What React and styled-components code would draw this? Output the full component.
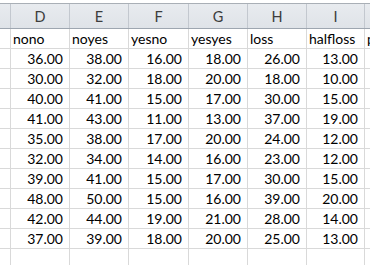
import React from 'react';
import styled, { createGlobalStyle } from 'styled-components';

const GlobalStyle = createGlobalStyle`
  body {
    margin: 0;
    background: #fff;
    font-family: Lato, "Open Sans", sans-serif;
  }
`;

// column widths incl. the 1px right gridline, C and J are clipped by the window
const columns = [
  { key: 'C', width: 11 },
  { key: 'D', width: 59 },
  { key: 'E', width: 59 },
  { key: 'F', width: 60 },
  { key: 'G', width: 59 },
  { key: 'H', width: 59 },
  { key: 'I', width: 58 },
  { key: 'J', width: 60 },
];

const names = ['', 'nono', 'noyes', 'yesno', 'yesyes', 'loss', 'halfloss', 'perc'];

const data = [
  [36, 38, 16, 18, 26, 13],
  [30, 32, 18, 20, 18, 10],
  [40, 41, 15, 17, 30, 15],
  [41, 43, 11, 13, 37, 19],
  [35, 38, 17, 20, 24, 12],
  [32, 34, 14, 16, 23, 12],
  [39, 41, 15, 17, 30, 15],
  [48, 50, 15, 16, 39, 20],
  [42, 44, 19, 21, 28, 14],
  [37, 39, 18, 20, 25, 13],
];

export default function App() {
  return (
    <>
      <GlobalStyle />
      <Sheet>
        <HeaderRow>
          {columns.map((col) => (
            <HeaderCell key={col.key} $w={col.width}>
              {col.key === 'C' || col.key === 'J' ? '' : col.key}
            </HeaderCell>
          ))}
        </HeaderRow>

        <Row>
          {columns.map((col, i) => (
            <Cell key={col.key} $w={col.width}>
              {names[i]}
            </Cell>
          ))}
        </Row>

        {data.map((values, r) => (
          <Row key={r}>
            {columns.map((col, i) => (
              <Cell key={col.key} $w={col.width} $num>
                {i > 0 && i <= values.length ? values[i - 1].toFixed(2) : ''}
              </Cell>
            ))}
          </Row>
        ))}

        <Row>
          {columns.map((col) => (
            <Cell key={col.key} $w={col.width} />
          ))}
        </Row>
      </Sheet>
    </>
  );
}

const Sheet = styled.div`
  width: 370px;
  height: 265px;
  overflow: hidden;
  padding-top: 3px;
  box-sizing: border-box;
  background: #fff;
`;

const HeaderRow = styled.div`
  display: flex;
  height: 24px;
  border-top: 1px solid #a9afb6;
  border-bottom: 1px solid #9ea6b0;
  background: linear-gradient(#e8ebef, #dfe3e8);
`;

const HeaderCell = styled.div`
  flex: 0 0 ${(p) => p.$w}px;
  box-sizing: border-box;
  border-right: 1px solid #c3c8cf;
  display: flex;
  align-items: center;
  justify-content: center;
  font-size: 14.5px;
  color: #3c3c3c;
`;

const Row = styled.div`
  display: flex;
  height: 20px;
`;

const Cell = styled.div`
  flex: 0 0 ${(p) => p.$w}px;
  box-sizing: border-box;
  border-right: 1px solid #d9d9d9;
  border-bottom: 1px solid #d9d9d9;
  display: flex;
  align-items: flex-end;
  justify-content: ${(p) => (p.$num ? 'flex-end' : 'flex-start')};
  padding: ${(p) => (p.$num ? '0 6px 1px 0' : '0 0 1px 2px')};
  font-size: 14px;
  line-height: 17px;
  color: #000;
  white-space: nowrap;
  overflow: hidden;
`;
